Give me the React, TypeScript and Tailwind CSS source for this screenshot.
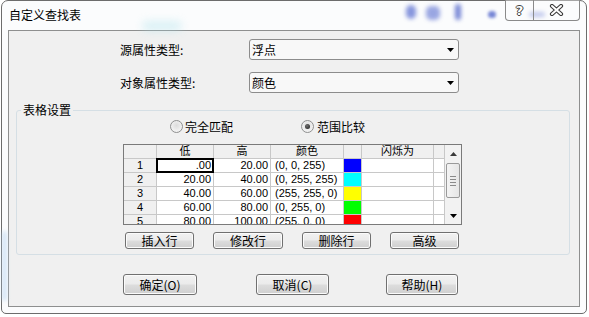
import React from "react";

const cjk = "font-['Noto_Sans_CJK_SC','Noto_Sans_CJK_JP',sans-serif]";
const grid = "font-['Liberation_Sans','Noto_Sans_CJK_SC',sans-serif]";

const btnCls =
  "flex items-center justify-center border border-[#707070] rounded-[3px] bg-[linear-gradient(#f2f2f2_0%,#ebebeb_48%,#dddddd_52%,#cfcfcf_100%)] shadow-[inset_0_0_0_1px_#fbfbfb] text-[12px] leading-none text-black";

function Radio({ checked }: { checked?: boolean }) {
  return (
    <div className="w-[13px] h-[13px] rounded-full border border-[#8e8f8f] bg-[radial-gradient(circle_at_50%_40%,#dcdcdc_0%,#eeeeee_55%,#f8f8f8_100%)] flex items-center justify-center shrink-0">
      {checked && (
        <div className="w-[5px] h-[5px] rounded-full bg-[radial-gradient(circle_at_40%_35%,#707070,#1c1c1c)]" />
      )}
    </div>
  );
}

function Arrow() {
  return (
    <svg width="7" height="4" viewBox="0 0 7 4">
      <polygon points="0,0 7,0 3.5,4" fill="#000" />
    </svg>
  );
}

function Dropdown({ value }: { value: string }) {
  return (
    <div className="w-[210px] h-[21px] border border-[#8c8c8c] rounded-[3px] bg-[#f8f8f8] flex items-center pl-[2px] pr-[4px]">
      <span className="flex-1 text-[12px] leading-none text-black">{value}</span>
      <Arrow />
    </div>
  );
}

const rows = [
  { n: "1", lo: ".00", hi: "20.00", c: "(0, 0, 255)", sw: "bg-[#0000ff]" },
  { n: "2", lo: "20.00", hi: "40.00", c: "(0, 255, 255)", sw: "bg-[#00ffff]" },
  { n: "3", lo: "40.00", hi: "60.00", c: "(255, 255, 0)", sw: "bg-[#ffff00]" },
  { n: "4", lo: "60.00", hi: "80.00", c: "(0, 255, 0)", sw: "bg-[#00ff00]" },
  { n: "5", lo: "80.00", hi: "100.00", c: "(255, 0, 0)", sw: "bg-[#ff0000]" },
];

function Grid() {
  const hdr = "bg-[#f0f0f0] flex items-center justify-center text-[11px] leading-none text-black";
  const num = "bg-white flex items-center justify-end pr-[2px] text-[11px] leading-none text-black";
  return (
    <div className={`mt-[11px] ml-[106px] w-[339px] h-[81px] border border-[#7a7a7a] flex bg-white ${grid}`}>
      <div className="w-[321px] h-[79px] overflow-hidden border-r border-[#c8c8c8]">
        <div className="grid grid-cols-[32px_56px_56px_72px_17px_71px_10px] auto-rows-[13px] gap-px bg-[#c8c8c8]">
          <div className={hdr}></div>
          <div className={hdr}>低</div>
          <div className={hdr}>高</div>
          <div className={hdr}>颜色</div>
          <div className={hdr}></div>
          <div className={hdr}>闪烁为</div>
          <div className={hdr}></div>
          {rows.map((r, i) => (
            <React.Fragment key={r.n}>
              <div className={hdr}>{r.n}</div>
              <div className={`${num} relative`}>
                {r.lo}
                {i === 0 && <div className="absolute -inset-[1px] border-2 border-black" />}
              </div>
              <div className={num}>{r.hi}</div>
              <div className="bg-white flex items-center pl-[4px] text-[11px] leading-none text-black whitespace-nowrap overflow-hidden">
                {r.c}
              </div>
              <div className={r.sw}></div>
              <div className="bg-white"></div>
              <div className="bg-white"></div>
            </React.Fragment>
          ))}
        </div>
      </div>
      <div className="w-[16px] h-[79px] bg-[#f2f2f2] flex flex-col">
        <div className="h-[17px] flex items-center justify-center">
          <svg width="7" height="4" viewBox="0 0 7 4">
            <polygon points="0,4 7,4 3.5,0" fill="#3a3a3a" />
          </svg>
        </div>
        <div className="mt-[1px] mx-[1px] w-[14px] h-[35px] border border-[#9a9a9a] rounded-[2px] bg-[linear-gradient(90deg,#f4f4f4,#e6e6e6)] flex flex-col items-center justify-center gap-[2px]">
          <div className="w-[6px] h-px bg-[#8a8a8a]" />
          <div className="w-[6px] h-px bg-[#8a8a8a]" />
          <div className="w-[6px] h-px bg-[#8a8a8a]" />
          <div className="w-[6px] h-px bg-[#8a8a8a]" />
        </div>
        <div className="flex-1" />
        <div className="h-[17px] flex items-center justify-center">
          <Arrow />
        </div>
      </div>
    </div>
  );
}

export default function App() {
  return (
    <div className={`w-[589px] h-[317px] bg-white overflow-hidden ${cjk}`}>
      <div className="ml-[1px] w-[586px] h-[314px] border border-[#6c6c6c] rounded-t-[7px] rounded-b-[5px] bg-[#fbfcfd] px-[6px] flex flex-col relative">
        {/* aero blur decorations */}
        <div className="absolute left-[404px] top-[4px] w-[10px] h-[14px] bg-[#3a52c8] opacity-60 blur-[2px] rounded-full" />
        <div className="absolute left-[424px] top-[5px] w-[14px] h-[14px] bg-[#3a52c8] opacity-50 blur-[2px] rounded-[5px]" />
        <div className="absolute left-[453px] top-[3px] w-[6px] h-[16px] bg-[#2f47c0] opacity-65 blur-[2px] rounded-full" />
        <div className="absolute left-[486px] top-[10px] w-[8px] h-[7px] bg-[#2f47c0] opacity-65 blur-[1.5px] rounded-full" />
        <div className="absolute left-[527px] top-[11px] w-[16px] h-[5px] bg-[#3a52c8] opacity-50 blur-[2px] rounded-full" />
        <div className="absolute left-[140px] top-[20px] w-[40px] h-[10px] bg-[#a8e0ea] opacity-40 blur-[4px] rounded-full" />
        <div className="absolute left-[0px] top-[230px] w-[5px] h-[70px] bg-[#b8d4f0] opacity-60 blur-[2px] rounded-full" />

        {/* title bar */}
        <div className="h-[29px] flex items-center pl-[1px] pb-[1px]">
          <span className="text-[12px] leading-none text-black">自定义查找表</span>
        </div>
        <div className="absolute -top-[1px] right-[6px] h-[21px] flex border border-t-0 border-[#8a8a8a] rounded-b-[4px] bg-[#fdfdfd]/40">
          <div className="w-[28px] flex items-center justify-center border-r border-[#8a8a8a]">
            <span className="text-[13px] font-bold leading-none text-white font-['DejaVu_Sans',sans-serif] [text-shadow:1px_0_#404040,-1px_0_#404040,0_1px_#404040,0_-1px_#404040]">
              ?
            </span>
          </div>
          <div className="w-[45px] flex items-center justify-center">
            <svg width="15" height="12" viewBox="0 0 15 12">
              <path d="M3 2 L12 10 M12 2 L3 10" stroke="#3c3c3c" strokeWidth="4.2" strokeLinecap="round" />
              <path d="M3 2 L12 10 M12 2 L3 10" stroke="#ffffff" strokeWidth="2" strokeLinecap="round" />
            </svg>
          </div>
        </div>

        {/* client */}
        <div className="w-[572px] h-[277px] border border-[#8e8f8f] bg-[#f0f0f0] flex flex-col">
          <div className="mt-[8px] h-[21px] flex items-center">
            <span className="ml-[111px] w-[129px] text-[12px] leading-none text-black">源属性类型:</span>
            <Dropdown value="浮点" />
          </div>
          <div className="mt-[12px] h-[21px] flex items-center">
            <span className="ml-[111px] w-[129px] text-[12px] leading-none text-black">对象属性类型:</span>
            <Dropdown value="颜色" />
          </div>

          {/* group box */}
          <div className="mt-[17px] ml-[7px] w-[554px] h-[145px] border border-[#d5dfe5] rounded-[3px] relative flex flex-col">
            <span className="absolute -top-[8px] left-[4px] px-[2px] bg-[#f0f0f0] text-[12px] leading-[14px] text-black">
              表格设置
            </span>
            <div className="mt-[9px] h-[13px] flex items-center">
              <div className="ml-[153px] flex items-center gap-[2px]">
                <Radio />
                <span className="text-[12px] leading-none text-black">完全匹配</span>
              </div>
              <div className="ml-[68px] flex items-center gap-[3px]">
                <Radio checked />
                <span className="text-[12px] leading-none text-black">范围比较</span>
              </div>
            </div>
            <Grid />
            <div className="mt-[7px] h-[17px] flex">
              <div className={`ml-[108px] w-[69px] h-[17px] ${btnCls}`}>插入行</div>
              <div className={`ml-[19px] w-[70px] h-[17px] ${btnCls}`}>修改行</div>
              <div className={`ml-[19px] w-[69px] h-[17px] ${btnCls}`}>删除行</div>
              <div className={`ml-[19px] w-[69px] h-[17px] ${btnCls}`}>高级</div>
            </div>
          </div>

          <div className="mt-[19px] h-[21px] flex">
            <div className={`ml-[114px] w-[74px] h-[21px] ${btnCls}`}>确定(O)</div>
            <div className={`ml-[59px] w-[73px] h-[21px] ${btnCls}`}>取消(C)</div>
            <div className={`ml-[57px] w-[72px] h-[21px] ${btnCls}`}>帮助(H)</div>
          </div>
        </div>
      </div>
    </div>
  );
}
